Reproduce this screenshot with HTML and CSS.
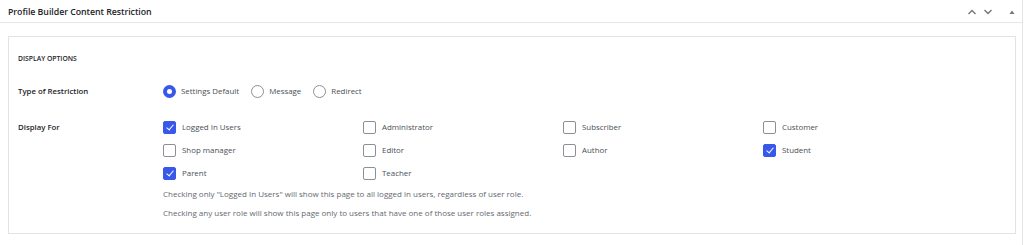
FILE: index.html
```html
<!DOCTYPE html>
<html>
<head>
<meta charset="utf-8">
<link rel="stylesheet" href="styles.css">
</head>
<body>
<div class="page">
  <div class="postbox">
    <div class="postbox-header">
      <h2 class="title">Profile Builder Content Restriction</h2>
      <div class="handles">
        <svg class="h-icon" width="10" height="8" viewBox="0 0 10 8"><path d="M1.5 6 L5 2.5 L8.5 6" fill="none" stroke="#72777c" stroke-width="1.4"/></svg>
        <svg class="h-icon" width="10" height="8" viewBox="0 0 10 8"><path d="M1.5 2 L5 5.5 L8.5 2" fill="none" stroke="#72777c" stroke-width="1.4"/></svg>
        <svg class="h-tri" width="8" height="8" viewBox="0 0 8 8"><path d="M1.5 6 L4 2.5 L6.5 6 Z" fill="#72777c"/></svg>
      </div>
    </div>
    <div class="inside">
      <div class="box">
        <h4 class="section-title">Display Options</h4>
        <div class="row row-type">
          <div class="label">Type of Restriction</div>
          <div class="radios">
            <label class="opt"><span class="radio checked"></span>Settings Default</label>
            <label class="opt"><span class="radio"></span>Message</label>
            <label class="opt"><span class="radio"></span>Redirect</label>
          </div>
        </div>
        <div class="row row-display">
          <div class="label">Display For</div>
          <div class="field">
            <div class="checks">
              <label class="opt"><span class="cb checked"></span>Logged In Users</label>
              <label class="opt"><span class="cb"></span>Administrator</label>
              <label class="opt"><span class="cb"></span>Subscriber</label>
              <label class="opt"><span class="cb"></span>Customer</label>
              <label class="opt"><span class="cb"></span>Shop manager</label>
              <label class="opt"><span class="cb"></span>Editor</label>
              <label class="opt"><span class="cb"></span>Author</label>
              <label class="opt"><span class="cb checked"></span>Student</label>
              <label class="opt"><span class="cb checked"></span>Parent</label>
              <label class="opt"><span class="cb"></span>Teacher</label>
            </div>
            <p class="desc">Checking only "Logged In Users" will show this page to all logged in users, regardless of user role.</p>
            <p class="desc">Checking any user role will show this page only to users that have one of those user roles assigned.</p>
          </div>
        </div>
      </div>
    </div>
  </div>
</div>
</body>
</html>
```

FILE: styles.css
```css
html, body {
  margin: 0;
  padding: 0;
  background: #fff;
}
body {
  font-family: "Open Sans", "Noto Sans", sans-serif;
  color: #1d2327;
  width: 1024px;
  height: 245px;
  overflow: hidden;
}
.page {
  width: 1022px;
  border-right: 1px solid #e2e4e7;
  height: 245px;
}
.postbox-header {
  height: 23px;
  border-bottom: 1px solid #e6e6e6;
  display: flex;
  align-items: center;
  justify-content: space-between;
  padding-left: 8px;
  padding-right: 6px;
  box-sizing: border-box;
}
.title {
  margin: 0;
  font-size: 8.8px;
  font-weight: 600;
  color: #1d2327;
  letter-spacing: -0.05px;
  padding-top: 1px;
}
.handles {
  display: flex;
  align-items: center;
  gap: 6px;
  padding-top: 2px;
}
.h-tri {
  margin-left: 9px;
}
.inside {
  padding: 13px 6px 10px 8px;
}
.box {
  border: 1px solid #e3e3e3;
  height: 198px;
  box-sizing: border-box;
  padding: 17px 9px 0 9px;
}
.section-title {
  margin: 0 0 21px 0;
  font-size: 6.8px;
  font-weight: 600;
  text-transform: uppercase;
  color: #1d2327;
  line-height: 10px;
}
.row {
  display: flex;
}
.label {
  width: 145px;
  font-size: 7.8px;
  font-weight: 600;
  color: #1d2327;
  line-height: 13px;
}
.row-display {
  margin-top: 23px;
}
.radios {
  display: flex;
  gap: 12px;
}
.opt {
  display: flex;
  align-items: center;
  font-size: 7.9px;
  color: #4a5056;
  line-height: 13px;
}
.radio {
  width: 11px;
  height: 11px;
  border: 1px solid #8c8f94;
  border-radius: 50%;
  margin-right: 5px;
  box-sizing: content-box;
  background: #fff;
}
.radio.checked {
  border: 4px solid #3858e9;
  width: 5px;
  height: 5px;
}
.field {
  display: flex;
  flex-direction: column;
}
.checks {
  display: grid;
  grid-template-columns: repeat(4, 200px);
  row-gap: 10px;
}
.cb {
  width: 11px;
  height: 11px;
  border: 1px solid #8c8f94;
  border-radius: 2px;
  margin-right: 6px;
  background: #fff;
  position: relative;
}
.cb.checked {
  background: #3858e9;
  border-color: #3858e9;
}
.cb.checked::after {
  content: "";
  position: absolute;
  left: 3.5px;
  top: 1px;
  width: 3px;
  height: 6px;
  border: solid #fff;
  border-width: 0 1px 1px 0;
  transform: rotate(40deg);
}
.desc {
  margin: 0;
  font-size: 8px;
  color: #646970;
  line-height: 13px;
}
.checks + .desc {
  margin-top: 7px;
}
.desc + .desc {
  margin-top: 6px;
}
```
